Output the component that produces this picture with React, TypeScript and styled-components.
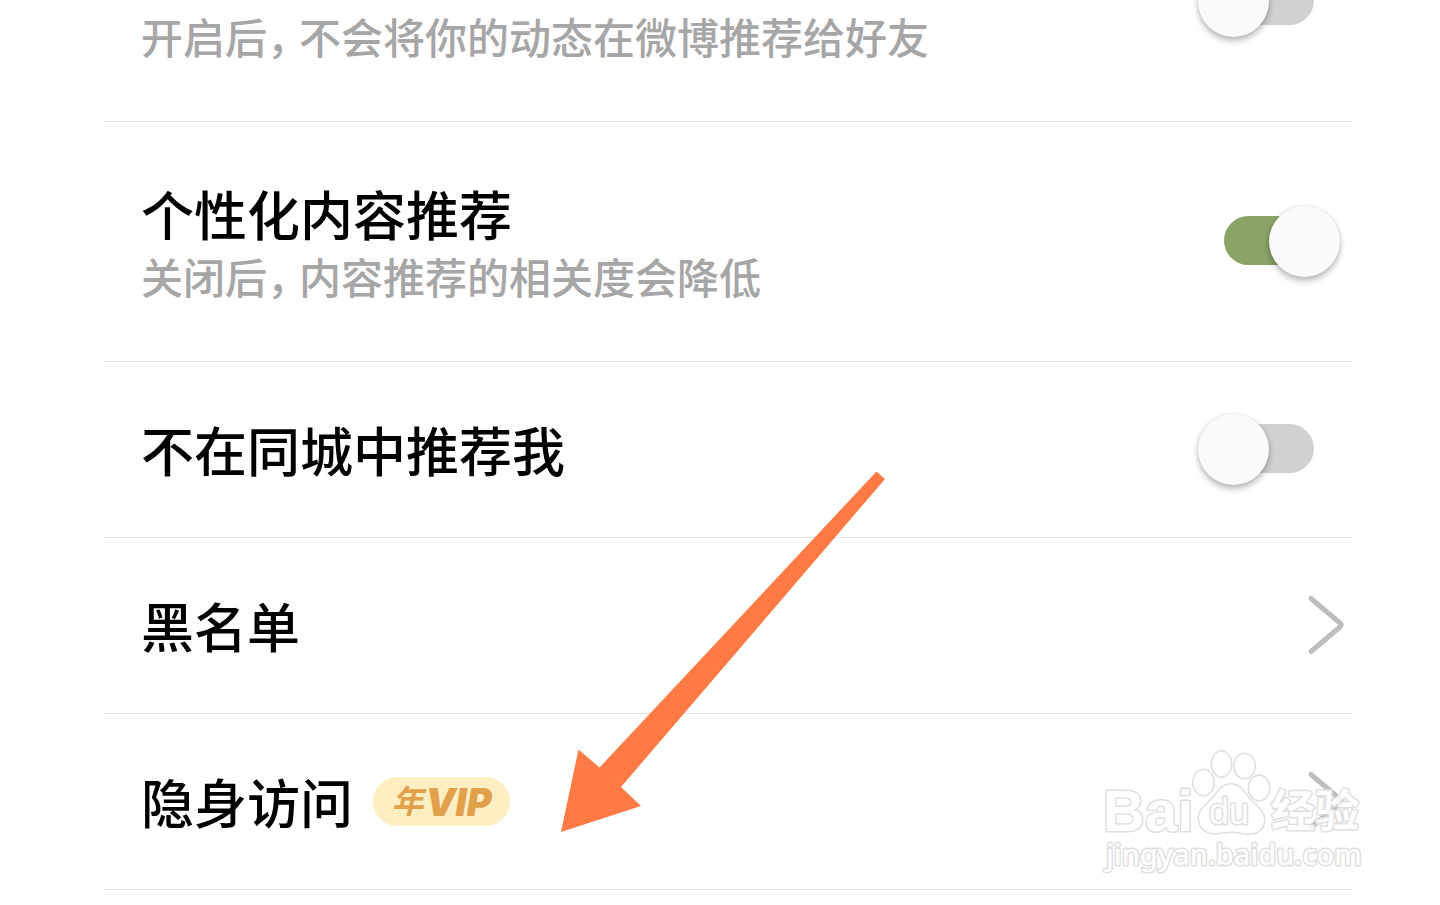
import React from 'react';
import styled, { createGlobalStyle, css } from 'styled-components';

const GlobalStyle = createGlobalStyle`
  * { box-sizing: border-box; }
  body {
    margin: 0;
    background: #fff;
    color: #000;
    font-family: "Noto Sans CJK SC", sans-serif;
    overflow: hidden;
  }
`;

const Page = styled.main`
  position: relative;
  height: 100vh;
  overflow: hidden;
  padding: 0 88px 0 105px;
`;

/* The list is scrolled so that its first row is half out of view. */
const List = styled.ul`
  list-style: none;
  margin: -118px 0 0;
  padding: 0;
`;

const Item = styled.li`
  border-bottom: 1px solid #e5e5e5;
`;

const rowStyle = css<{ $tall?: boolean }>`
  display: flex;
  align-items: center;
  justify-content: space-between;
  height: ${(p) => (p.$tall ? 239 : 175)}px;
  padding-left: 36px;
  color: inherit;
  text-decoration: none;
  cursor: pointer;
`;

const SwitchRow = styled.label<{ $tall?: boolean }>`
  ${rowStyle}
  padding-right: 12px;
`;

const LinkRow = styled.a`
  ${rowStyle}
  padding-right: 7px;
`;

const Texts = styled.span<{ $tall?: boolean }>`
  display: flex;
  flex-direction: column;
  padding-top: ${(p) => (p.$tall ? 2 : 0)}px;
  padding-bottom: ${(p) => (p.$tall ? 0 : 2)}px;
`;

const Title = styled.span`
  display: flex;
  align-items: center;
  gap: 20px;
  min-height: 66px;
  font-size: 53px;
  line-height: 66px;
  font-weight: 500;
`;

const Subtitle = styled.span`
  font-size: 42px;
  line-height: 60px;
  font-weight: 500;
  color: #a6a6a6;
`;

const Comma = styled.span`
  margin-right: 11px;
  font-feature-settings: "halt";
`;

const Switch = styled.input`
  appearance: none;
  position: relative;
  flex: none;
  width: 90px;
  height: 49px;
  margin: 0 26px 2px;
  border-radius: 25px;
  background: #d1d1d1;
  cursor: pointer;

  &::before {
    content: "";
    position: absolute;
    top: -10px;
    left: -26px;
    width: 71px;
    height: 71px;
    border-radius: 50%;
    background: #fafafa;
    box-shadow: 0 4px 6px rgba(0, 0, 0, 0.26), 0 0 4px rgba(0, 0, 0, 0.1);
  }

  &:checked {
    background: #8aa468;
  }

  &:checked::before {
    left: 45px;
  }
`;

const VipBadge = styled.span`
  display: flex;
  align-items: center;
  justify-content: center;
  gap: 2px;
  width: 137px;
  height: 49px;
  margin-top: 2px;
  border-radius: 25px;
  background: #feefc3;
  color: #e2a04a;
  font-family: Inter, "Noto Sans CJK SC", sans-serif;
  font-size: 38px;
  line-height: 48px;
  font-weight: 900;
  font-style: italic;
`;

const Year = styled.span`
  font-size: 32px;
  font-weight: 700;
`;

const Arrow = styled.svg`
  position: absolute;
  left: 560px;
  top: 470px;
  pointer-events: none;
`;

const Watermark = styled.svg`
  position: absolute;
  right: 70px;
  top: 740px;
  pointer-events: none;
`;

const Chevron = () => (
  <svg width="40" height="66" viewBox="0 0 40 66" fill="none" aria-hidden="true">
    <path
      d="M6 5.500 L35 30 Q37.500 32 35 34 L6 58.500"
      stroke="#bdbdbd"
      strokeWidth="5"
      strokeLinecap="round"
      strokeLinejoin="round"
    />
  </svg>
);

export default function App() {
  return (
    <Page>
      <GlobalStyle />
      <List>
        <Item>
          <SwitchRow $tall>
            <Texts $tall>
              <Title />
              <Subtitle>
                开启后<Comma>，</Comma>不会将你的动态在微博推荐给好友
              </Subtitle>
            </Texts>
            <Switch type="checkbox" />
          </SwitchRow>
        </Item>
        <Item>
          <SwitchRow $tall>
            <Texts $tall>
              <Title>个性化内容推荐</Title>
              <Subtitle>
                关闭后<Comma>，</Comma>内容推荐的相关度会降低
              </Subtitle>
            </Texts>
            <Switch type="checkbox" defaultChecked />
          </SwitchRow>
        </Item>
        <Item>
          <SwitchRow>
            <Texts>
              <Title>不在同城中推荐我</Title>
            </Texts>
            <Switch type="checkbox" />
          </SwitchRow>
        </Item>
        <Item>
          <LinkRow href="#blacklist">
            <Texts>
              <Title>黑名单</Title>
            </Texts>
            <Chevron />
          </LinkRow>
        </Item>
        <Item>
          <LinkRow href="#invisible">
            <Texts>
              <Title>
                隐身访问
                <VipBadge>
                  <Year>年</Year>VIP
                </VipBadge>
              </Title>
            </Texts>
            <Chevron />
          </LinkRow>
        </Item>
      </List>

      <Arrow width="330" height="365" viewBox="0 0 330 365" aria-hidden="true">
        <path d="M316.500 1.500 L325 9 L61 317 L81 336 L1 362 L18.500 279.500 L39.500 297.500 Z" fill="#ff7a45" />
      </Arrow>

      <Watermark width="270" height="140" viewBox="1100 740 270 140">
        <g
          fill="#fff"
          stroke="#dadada"
          strokeWidth="3"
          strokeLinejoin="round"
          paintOrder="stroke"
          opacity="0.85"
        >
          <text x="1103" y="831" fontFamily="Liberation Sans, sans-serif" fontWeight="700" fontSize="58">
            Bai
          </text>
          <ellipse cx="1203.500" cy="782.500" rx="10" ry="12.500" />
          <ellipse cx="1221.500" cy="764" rx="9.500" ry="12.500" />
          <ellipse cx="1244.500" cy="766" rx="10" ry="12" />
          <ellipse cx="1259" cy="788" rx="10" ry="12" />
          <path d="M1231 784.500 C1241 784.500 1244 793 1249 799 C1255 805 1264 811 1264 820 C1264 829 1257 834 1248 833.500 C1241 833 1237 831.500 1231 831.500 C1225 831.500 1220 833.500 1213 833 C1204 832 1199 826 1199 818 C1199 809 1209 803 1214 797 C1219 791 1222 784.500 1231 784.500 Z" />
          <text x="1209" y="824" fontFamily="Liberation Sans, sans-serif" fontSize="36">
            du
          </text>
          <text x="1271" y="827" fontFamily="Noto Sans CJK SC, sans-serif" fontWeight="700" fontSize="44">
            经验
          </text>
          <text x="1106" y="865" fontFamily="Noto Sans, sans-serif" fontWeight="500" fontSize="29">
            jingyan.baidu.com
          </text>
        </g>
      </Watermark>
    </Page>
  );
}
